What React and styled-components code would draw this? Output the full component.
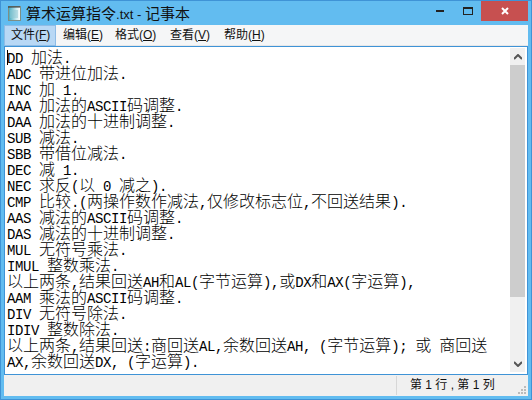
import React from 'react';
import styled, { createGlobalStyle } from 'styled-components';

const Global = createGlobalStyle`
  html, body { margin: 0; padding: 0; background: #fff; }
  * { box-sizing: border-box; }
`;
const Win = styled.div`
  width: 532px; height: 400px; background: #62bcf0; border: 1px solid #3f93d6;
  padding: 0 3px 3px 3px; display: flex; flex-direction: column; overflow: hidden;
`;
const TitleBar = styled.div`
  height: 24px; display: flex; align-items: flex-start; flex: none;
`;
const AppIcon = styled.svg`
  width: 16px; height: 16px; margin: 4px 0 0 3px; flex: none;
`;
const Title = styled.div`
  margin: 2px 0 0 3px; font: 15px/22px "Liberation Sans", "Noto Sans CJK SC", sans-serif; color: #111; white-space: nowrap; flex: 1;
`;
const TitleLat = styled.span`
  font-size: 13px;
`;
const Ctl = styled.div`
  width: ${p => p.$w}px; height: 20px; display: flex; align-items: center; justify-content: center; background: ${p => p.$bg || 'transparent'};
`;
const Body = styled.div`
  flex: 1; min-height: 0; display: flex; flex-direction: column; background: #f0f0f0;
`;
const MenuBar = styled.div`
  height: 21px; flex: none; background: #f5f6f7; border-bottom: 1px solid #e6e7e8; display: flex; align-items: center;
  font: 12px/18px "Liberation Sans", "Noto Sans CJK SC", sans-serif; color: #111;
`;
const MenuItem = styled.div`
  height: 21px; line-height: 19px; width: ${p => p.$w}px; padding-left: 6px;
  background: ${p => p.$active ? '#b8d8f5' : 'transparent'};
  border: 1px solid ${p => p.$active ? '#8ebce6' : 'transparent'};
  u { text-decoration: underline; }
`;
const Main = styled.div`
  flex: 1; min-height: 0; display: flex; background: #fff; border: 1px solid #3f93d6; position: relative;
`;
const Editor = styled.div`
  flex: 1; min-width: 0; padding: 1px 0 0 2px; background: #fff; overflow: hidden; color: #000;
`;
const Line = styled.div`
  height: 16px; line-height: 16px; white-space: pre; font-size: 16px; font-family: "Noto Sans CJK SC", sans-serif; font-weight: 300;
`;
const Lat = styled.span`
  font: 14px/16px "Liberation Mono", monospace; letter-spacing: -0.4px;
`;
const Caret = styled.div`
  position: absolute; left: 2px; top: 3px; width: 1px; height: 15px; background: #000;
`;
const ScrollBar = styled.div`
  width: 15px; flex: none; background: #f0f0f0; display: flex; flex-direction: column; margin: 1px 2px 2px 0;
`;
const SBtn = styled.div`
  height: 17px; flex: none; display: flex; align-items: center; justify-content: center;
  margin-top: ${p => p.$end ? 'auto' : '0'};
`;
const Thumb = styled.div`
  height: 232px; flex: none; background: #cdcdcd;
`;
const StatusBar = styled.div`
  height: 21px; flex: none; background: #f0f0f0; display: flex; position: relative;
`;
const StatusSpace = styled.div` flex: 1; `;
const StatusCell = styled.div`
  width: 132px; margin: 1px 0; border-left: 1px solid #d7d7d7; font: 12px/19px "Liberation Sans", "Noto Sans CJK SC", sans-serif; color: #111; padding-left: 13px; white-space: pre;
`;
const Grip = styled.svg`
  position: absolute; right: 1px; bottom: 1px; width: 9px; height: 9px;
`;

const lines = [
  'DD 加法.', 'ADC 带进位加法.', 'INC 加 1.', 'AAA 加法的ASCII码调整.', 'DAA 加法的十进制调整.', 'SUB 减法.', 'SBB 带借位减法.', 'DEC 减 1.',
  'NEC 求反(以 0 减之).', 'CMP 比较.(两操作数作减法,仅修改标志位,不回送结果).', 'AAS 减法的ASCII码调整.', 'DAS 减法的十进制调整.', 'MUL 无符号乘法.', 'IMUL 整数乘法.',
  '以上两条,结果回送AH和AL(字节运算),或DX和AX(字运算),', 'AAM 乘法的ASCII码调整.', 'DIV 无符号除法.', 'IDIV 整数除法.',
  '以上两条,结果回送:商回送AL,余数回送AH, (字节运算); 或 商回送', 'AX,余数回送DX, (字运算).',
];
const seg = s => s.match(/[\x00-\x7f]+|[^\x00-\x7f]+/g).map((t, i) => /^[\x00-\x7f]/.test(t) ? <Lat key={i}>{t}</Lat> : <span key={i}>{t}</span>);
const menus = [['文件','F',52,1],['编辑','E',52],['格式','O',55],['查看','V',54],['帮助','H',54]];

export default function App() {
  return (
    <Win>
      <Global />
      <TitleBar>
        <AppIcon viewBox="0 0 16 16">
          <defs>
            <linearGradient id="pg" x1="0" x2="1" y1="0" y2="0">
              <stop offset="0" stopColor="#3fa9bf" />
              <stop offset="0.7" stopColor="#d5eef2" />
              <stop offset="1" stopColor="#ffffff" />
            </linearGradient>
          </defs>
          <rect x="1.5" y="1.5" width="12" height="14" fill="url(#pg)" stroke="#7d8f86" />
          <path d="M2 1v2M4 1v2M6 1v2M8 1v2M10 1v2M12 1v2" stroke="#333" />
          <path d="M3 6h8M3 8h8M3 10h8M3 12h8" stroke="#8fc6d2" />
        </AppIcon>
        <Title>算术运算指令<TitleLat>.txt - </TitleLat>记事本</Title>
        <Ctl $w={29}><svg width="8" height="2"><rect width="8" height="2" fill="#222" /></svg></Ctl>
        <Ctl $w={27}><svg width="10" height="9"><rect x=".5" y=".5" width="9" height="7" fill="none" stroke="#222" /><rect width="10" height="2" fill="#222" /></svg></Ctl>
        <Ctl $w={47} $bg="#c75050"><svg width="8" height="8"><path d="M1 1l6 6M7 1l-6 6" stroke="#fff" strokeWidth="2" /></svg></Ctl>
      </TitleBar>
      <Body>
        <MenuBar>
          {menus.map(([a, b, w, act]) => <MenuItem key={b} $w={w} $active={act}>{a}(<u>{b}</u>)</MenuItem>)}
        </MenuBar>
        <Main>
          <Editor>{lines.map((l, i) => <Line key={i}>{seg(l)}</Line>)}</Editor>
          <Caret />
          <ScrollBar>
            <SBtn><svg width="8" height="6"><path d="M0 5l4-4 4 4" fill="none" stroke="#555" strokeWidth="2" /></svg></SBtn>
            <Thumb />
            <SBtn $end><svg width="8" height="6"><path d="M0 1l4 4 4-4" fill="none" stroke="#555" strokeWidth="2" /></svg></SBtn>
          </ScrollBar>
        </Main>
        <StatusBar>
          <StatusSpace />
          <StatusCell>第 1 行 , 第 1 列</StatusCell>
          <Grip viewBox="0 0 9 9"><path d="M6 0h2v2h-2zM3 3h2v2h-2zM6 3h2v2h-2zM0 6h2v2h-2zM3 6h2v2h-2zM6 6h2v2h-2z" fill="#bbb" /></Grip>
        </StatusBar>
      </Body>
    </Win>
  );
}
